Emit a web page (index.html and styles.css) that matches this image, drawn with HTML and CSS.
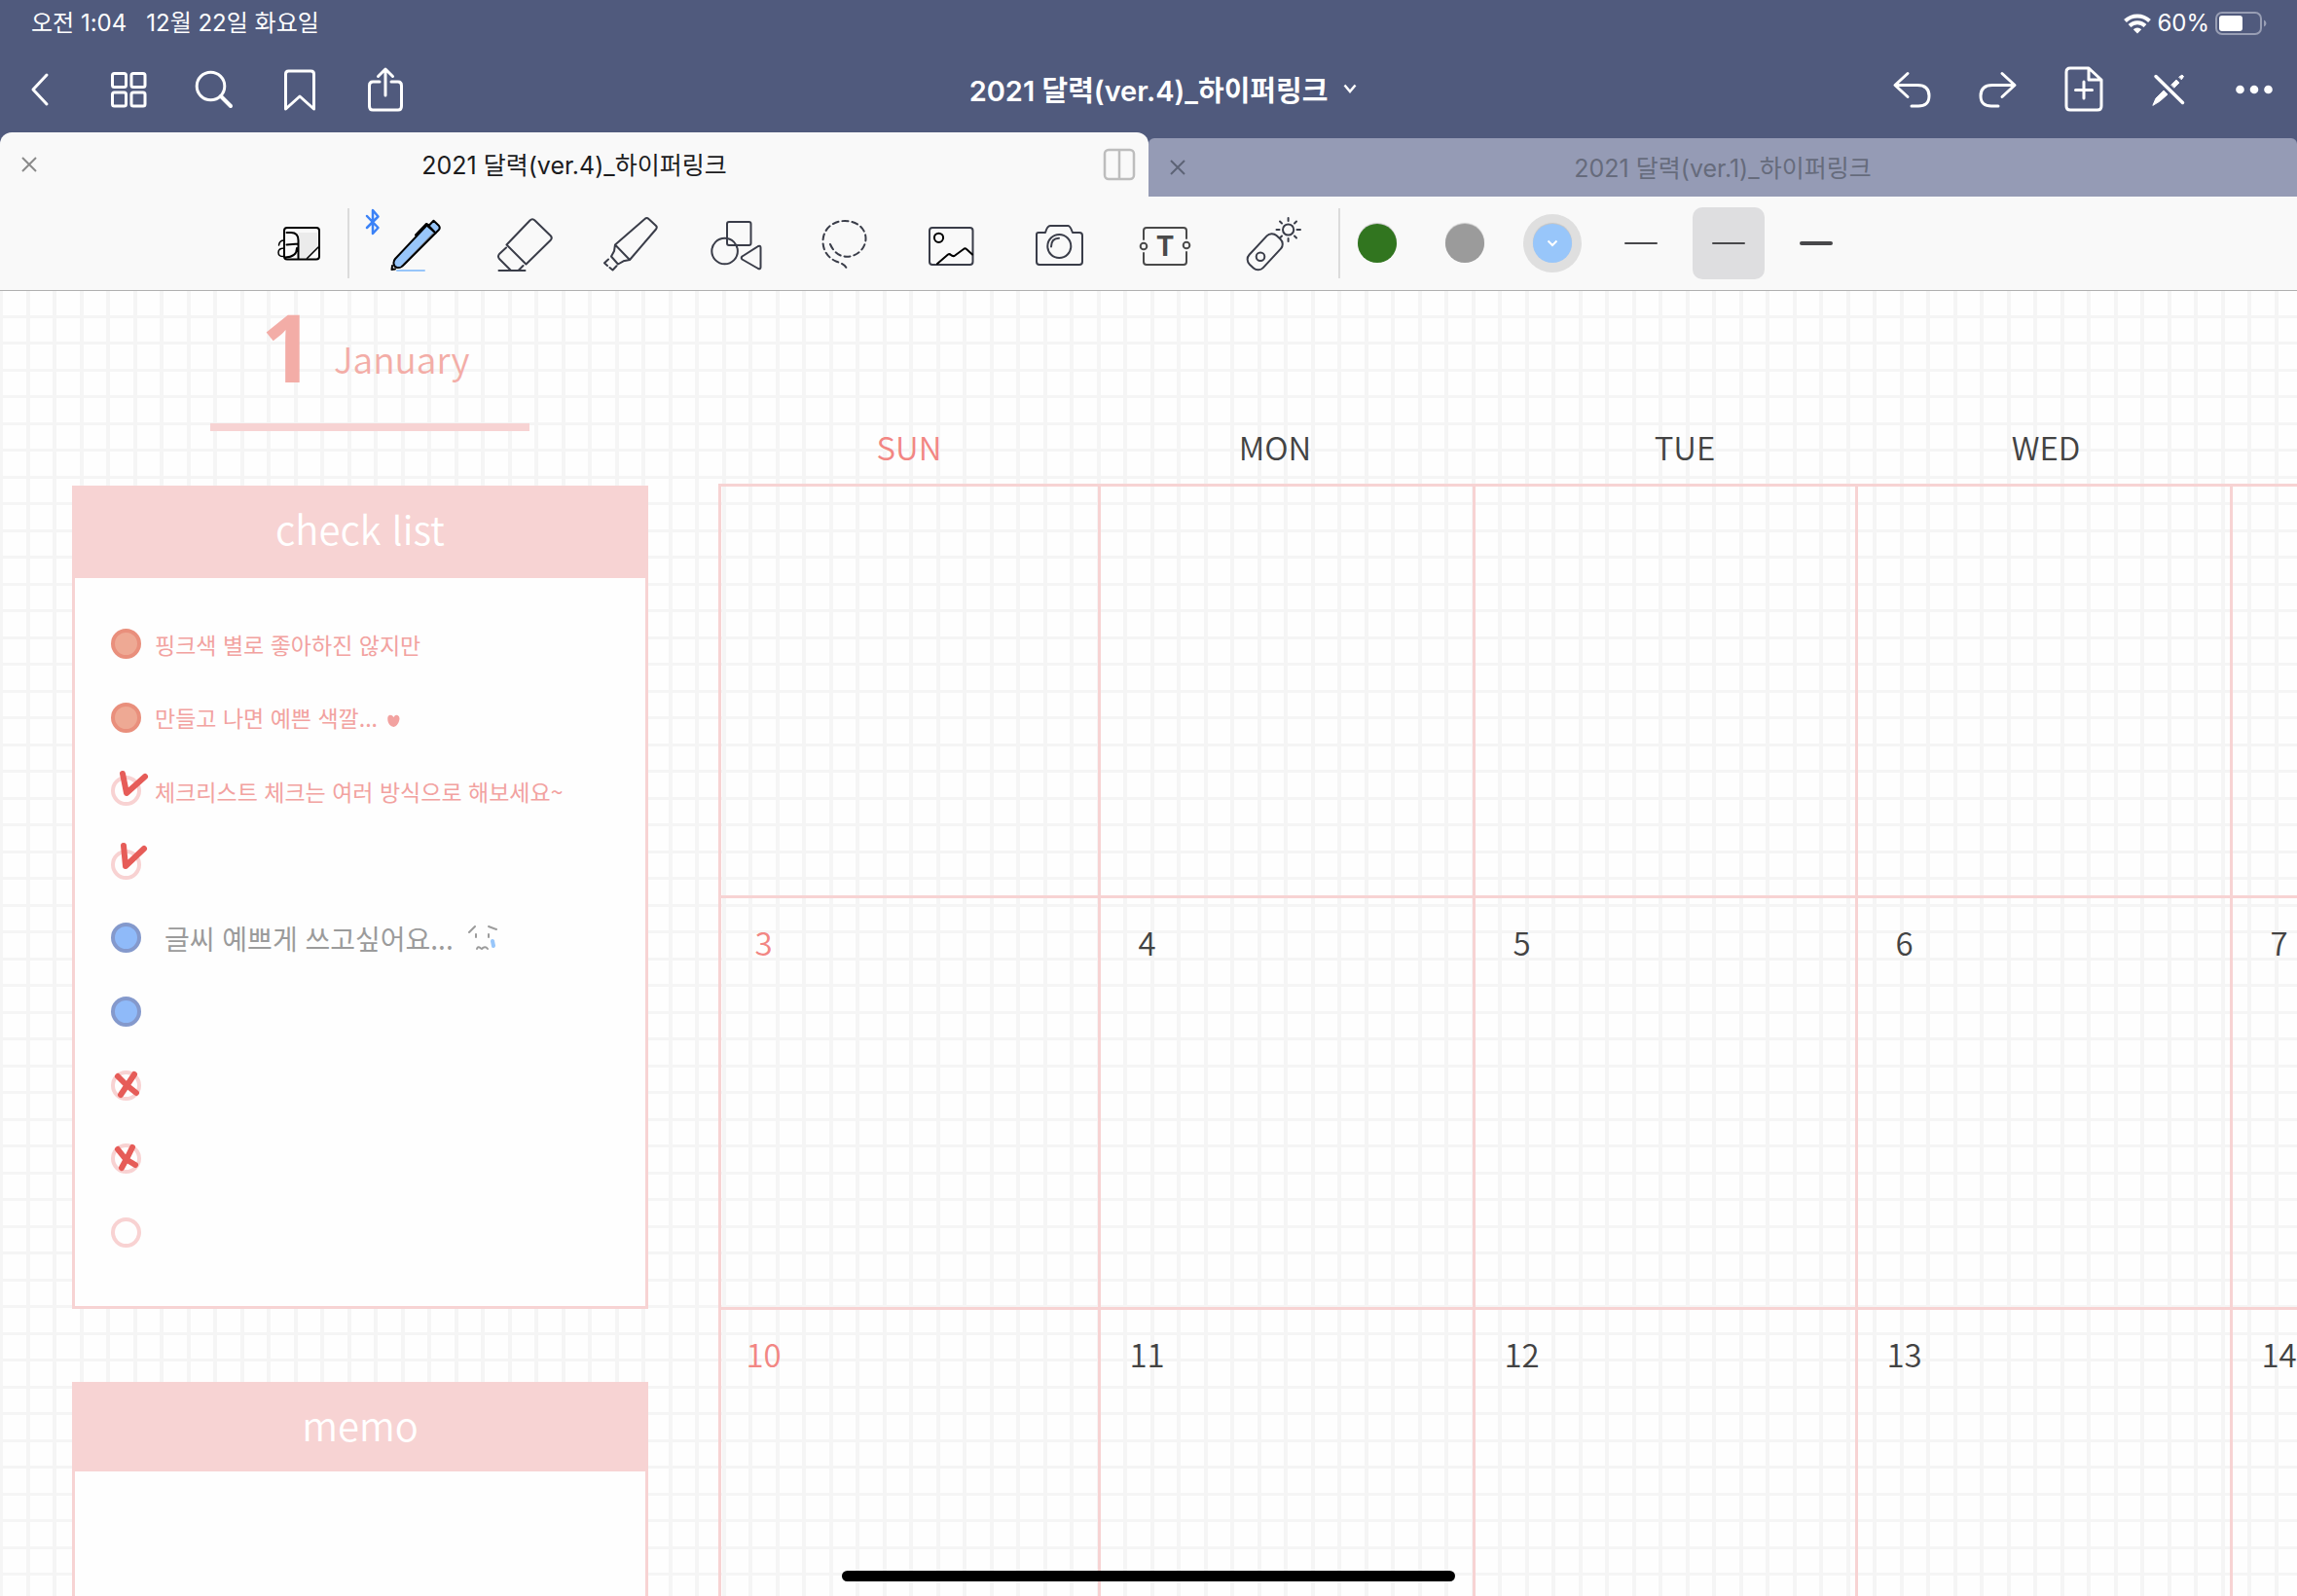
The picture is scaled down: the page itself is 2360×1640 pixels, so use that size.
FILE: index.html
```html
<!DOCTYPE html>
<html lang="ko">
<head>
<meta charset="utf-8">
<meta name="viewport" content="width=device-width, initial-scale=1">
<title>2021 달력(ver.4)_하이퍼링크</title>
<link rel="stylesheet" href="styles.css">
</head>
<body>
<div class="app">
  <header class="top">
    <div class="status">
      <span>오전 1:04</span>
      <span>12월 22일 화요일</span>
      <span class="status-right">
        <svg class="wifi" width="28" height="22" viewBox="0 0 28 22" aria-label="Wi-Fi"><g fill="none" stroke="#fff" stroke-width="4"><path d="M1.500 8.500A18 18 0 0 1 26.500 8.500"/><path d="M6 13.500A11.500 11.500 0 0 1 22 13.500"/></g><path d="M14 21.500L9.800 17.200A6 6 0 0 1 18.200 17.200Z" fill="#fff"/></svg>
        <span>60%</span>
        <svg width="54" height="24" viewBox="0 0 54 24" aria-label="배터리"><rect x="1" y="1" width="46" height="22" rx="6" fill="none" stroke="#989eb4" stroke-width="2"/><rect x="4" y="4" width="24" height="16" rx="3" fill="#fff"/><path d="M50 8.500Q52.500 9.500 52.500 12T50 15.500Z" fill="#989eb4"/></svg>
      </span>
    </div>
    <nav class="nav">
      <div class="nav-group">
        <button class="nav-btn" aria-label="뒤로"><svg viewBox="0 0 48 48"><path d="M28 9L14 24L28 39"/></svg></button>
        <button class="nav-btn" aria-label="페이지 목록"><svg viewBox="0 0 48 48"><rect x="7.500" y="7.500" width="14" height="14" rx="2"/><rect x="27" y="7.500" width="14" height="14" rx="2"/><rect x="7.500" y="27" width="14" height="14" rx="2"/><rect x="27" y="27" width="14" height="14" rx="2"/></svg></button>
        <button class="nav-btn" aria-label="검색"><svg viewBox="0 0 48 48"><circle cx="20.500" cy="20.500" r="14.300"/><path d="M31 31L41 41" stroke-width="4"/></svg></button>
        <button class="nav-btn" aria-label="북마크"><svg viewBox="0 0 48 48"><path d="M9.500 44V8Q9.500 5 12.500 5H35.500Q38.500 5 38.500 8V44L24 31Z"/></svg></button>
        <button class="nav-btn" aria-label="공유"><svg viewBox="0 0 48 48"><path d="M18 16H11Q7.500 16 7.500 20V41Q7.500 45 11 45H37Q40.500 45 40.500 41V20Q40.500 16 37 16H30M24 30V3M16.500 10.500L24 3L31.500 10.500"/></svg></button>
      </div>
      <button class="doc-title">2021 달력(ver.4)_하이퍼링크
        <svg width="14" height="10" viewBox="0 0 14 10"><path d="M1.500 1.500L7 8L12.500 1.500" fill="none" stroke="#fff" stroke-width="2.500"/></svg>
      </button>
      <div class="nav-group nav-end">
        <button class="nav-btn" aria-label="실행 취소"><svg viewBox="0 0 48 48"><path d="M20 7.500L7 19.500L20 31.500M8 19.500H30Q42 19.500 42 30.500T30 41H24"/></svg></button>
        <button class="nav-btn" aria-label="다시 실행"><svg viewBox="0 0 48 48"><path d="M29 7.500L42 19.500L29 31.500M41 19.500H19Q7 19.500 7 30.500T19 41H25"/></svg></button>
        <button class="nav-btn" aria-label="페이지 추가"><svg viewBox="0 0 48 48"><path d="M11 2H30L43 14V41Q43 45 39 45H11Q7 45 7 41V6Q7 2 11 2ZM30 2V14H43M25 16V33M16.500 24.500H33.500"/></svg></button>
        <button class="nav-btn" aria-label="읽기 전용"><svg viewBox="0 0 48 48"><path d="M11 10.500L38.500 37.500" stroke-width="3.500"/><path d="M8 40L11 33L19 25L23 29L15 36Z M27 19L32 14L35 17L30 22Z M35 11L38 9L39.500 10.500L37.500 13.500Z" fill="#fff" stroke-width="1"/></svg></button>
        <button class="nav-btn" aria-label="더 보기"><svg viewBox="0 0 48 48"><g fill="#fff" stroke="none"><circle cx="9.500" cy="24" r="4.300"/><circle cx="24" cy="24" r="4.300"/><circle cx="38.500" cy="24" r="4.300"/></g></svg></button>
      </div>
    </nav>
    <div class="tabs">
      <div class="tab tab-active">
        <button class="tab-close" aria-label="탭 닫기"><svg viewBox="0 0 16 16"><path d="M1 1L15 15M15 1L1 15"/></svg></button>
        <a class="tab-name" href="#ver4">2021 달력(ver.4)_하이퍼링크</a>
        <button class="tab-split" aria-label="화면 분할"><svg width="34" height="34" viewBox="0 0 34 34" fill="none" stroke="#bdbdbd" stroke-width="2.500"><rect x="2" y="2" width="30" height="30" rx="4"/><path d="M17 2V32"/></svg></button>
      </div>
      <div class="tab">
        <button class="tab-close" aria-label="탭 닫기"><svg viewBox="0 0 16 16"><path d="M1 1L15 15M15 1L1 15"/></svg></button>
        <a class="tab-name" href="#ver1">2021 달력(ver.1)_하이퍼링크</a>
      </div>
    </div>
  </header>

  <div class="toolbar" role="toolbar">
    <button class="tool tool-zoom" aria-label="확대 창"><svg viewBox="0 0 60 60"><path d="M29.500 19H49V34L38.500 45H29.500Z" fill="#ebebeb" stroke="none"/><g stroke="#000"><rect x="15" y="14" width="36" height="32.500" rx="3"/><path d="M17.500 19H22Q29.500 19 29.500 27V45.500M17.500 31.500L29.500 30.500M28 35Q28 44 16 44.500"/><path d="M9.500 32Q10 27 15 27M15 35Q9 35 9 39.500T15 43.500" stroke-width="1.500"/><path d="M38.500 45.500L50 34" stroke-width="1.500"/></g></svg></button>
    <span class="divider"></span>
    <div class="tools">
      <button class="tool" aria-label="펜"><svg viewBox="0 0 60 60"><path d="M-21 2L-9.500 14L-15 20V-4L-9.500 2.500L-21 14" stroke="#3b82f7" stroke-width="2.500"/><path d="M40.500 11.500L8 46C5.500 49 6 54 10 55C13 55.500 15 54.500 17 52L49.500 19.500Z" fill="#98c6fa" stroke="none"/><path d="M46.500 19.500L22 45L13 54L17 52L49 20Z" fill="#7b8088" stroke="none"/><path d="M42.500 12L47.500 6.800L53 12Q54.500 14 53 16L49.500 19.500Z" fill="#98c6fa" stroke="#000"/><path d="M40.500 11.500L8 46C5.500 49 6 54 10 55C13 55.500 15 54.500 17 52L49.500 19.500ZM29 21.500L40 10L42 11" stroke="#000"/><path d="M5 53L4.500 57L8 56.500" stroke="#000"/><path d="M10 58H38" stroke="#98c6fa"/></svg></button>
      <button class="tool" aria-label="지우개"><svg viewBox="0 0 60 60"><path d="M12.500 31.500L36.500 6.500Q39 4 41.500 6.500L57.500 22Q60 24.500 57.500 27L32.500 51.500ZM12 34.500L5 41Q3 43.500 5 46L16.500 57.500M29.500 53L25 57.500M4.500 58H31.500"/></svg></button>
      <button class="tool" aria-label="형광펜"><svg viewBox="0 0 60 60"><path d="M14 31.500L44.500 5Q46.500 3 48.500 5L56 12Q57.500 13.500 56 15.500L29 47ZM14 31.500L13 38L10 43.500L17 51.500L22.500 48.300L29 47M7 46.500L3 50.300L6 53M8.500 55L11.500 57.500L15.500 53.300"/></svg></button>
      <button class="tool" aria-label="도형"><svg viewBox="0 0 60 60"><rect x="19" y="8" width="24.500" height="24" rx="2"/><circle cx="16.600" cy="38" r="13.300"/><path d="M34.500 43.500L51 33Q53.500 32 53.500 34.500V54.500Q53.500 57 51 56L34.500 46.500Q33 45 34.500 43.500Z"/></svg></button>
      <button class="tool" aria-label="올가미"><svg viewBox="0 0 60 60"><path stroke-dasharray="6 4" d="M15 31C19 40 25 43.700 32 43.700C43 43.700 51.500 35 51.500 25C51.500 14.500 42 7 30 7C17 7 7.500 16 7.500 28C7.500 38 13 45 21 48.500C28 51 32 53 32 58"/></svg></button>
      <button class="tool" aria-label="이미지"><svg viewBox="0 0 60 60"><rect x="7" y="14" width="44.500" height="38" rx="3"/><g stroke="#000"><circle cx="16.500" cy="24.300" r="4.600"/><path d="M15 51L26 41.500Q27.500 40.500 29 42T32.500 43L42 36Q43.500 34.500 45 36L51 41.500"/></g></svg></button>
      <button class="tool" aria-label="카메라"><svg viewBox="0 0 60 60"><path d="M9 19H16Q18 12 21 12H39.500Q41.500 12 44 19H51Q54 19 54 22V49Q54 52 51 52H10Q7 52 7 49V21Q7 19 9 19Z"/><circle cx="30.300" cy="33" r="12"/><path d="M22 33.500Q22 25 30 24.700"/></svg></button>
      <button class="tool" aria-label="텍스트"><svg viewBox="0 0 60 60"><g stroke="#4a4a4a"><path d="M7 26V17Q7 14 10 14H48Q51 14 51 17V25M7 40V49Q7 52 10 52H48Q51 52 51 49V39"/><circle cx="7" cy="33" r="3.300"/><circle cx="51" cy="32" r="3.300"/></g><text x="29" y="43" class="tool-letter">T</text></svg></button>
      <button class="tool" aria-label="레이저 포인터"><svg viewBox="0 0 60 60"><rect x="1.500" y="29" width="40.500" height="19.500" rx="7" transform="rotate(-47 21.700 38.800)"/><circle cx="17" cy="43.700" r="4.300"/><circle cx="45.600" cy="16" r="5.600"/><path d="M45.600 4V7M45.600 25V28M33.500 16H36.500M54.500 16H58M37 7.500L39 9.500M54 7.500L52 9.500M54 24.500L52 22.500M37 24.500L39 22.500"/></svg></button>
    </div>
    <span class="divider divider-end"></span>
    <div class="colors">
      <button class="color" aria-label="초록"><span class="swatch swatch-green"></span></button>
      <button class="color" aria-label="회색"><span class="swatch swatch-gray"></span></button>
      <button class="color color-on" aria-label="파랑" aria-pressed="true"><span class="swatch swatch-blue"><svg width="12" height="8" viewBox="0 0 12 8"><path d="M1.500 1.500L6 6L10.500 1.500" fill="none" stroke="#fff" stroke-width="2"/></svg></span></button>
    </div>
    <div class="strokes">
      <button class="stroke" aria-label="가는 선"><span class="line"></span></button>
      <button class="stroke stroke-on" aria-label="보통 선" aria-pressed="true"><span class="line"></span></button>
      <button class="stroke" aria-label="굵은 선"><span class="line line-thick"></span></button>
    </div>
  </div>

  <main class="page">
    <aside class="side">
      <h1 class="month"><span class="month-num">1</span><span class="month-name">January</span></h1>
      <section class="panel checklist">
        <h2 class="panel-title">check list</h2>
        <ul class="checks">
          <li><label class="check"><span class="mark"><input type="checkbox" class="dot dot-coral" checked></span><span>핑크색 별로 좋아하진 않지만</span></label></li>
          <li><label class="check"><span class="mark"><input type="checkbox" class="dot dot-coral" checked></span><span>만들고 나면 예쁜 색깔...<svg class="heart" width="13" height="13" viewBox="0 0 13 13"><path d="M6.500 3Q8 0 10.500 1Q13.500 2.500 12 7Q10.500 12 6.500 13Q1.500 12 .5 7Q-.5 1.500 2.500 .8Q5 .5 6.500 3Z" fill="#f2a2a0"/></svg></span></label></li>
          <li><label class="check"><span class="mark"><input type="checkbox" class="dot" checked><svg class="ink" viewBox="0 0 48 48"><path d="M20 6L24 26L43 9"/></svg></span><span>체크리스트 체크는 여러 방식으로 해보세요~</span></label></li>
          <li><label class="check"><span class="mark"><input type="checkbox" class="dot" checked aria-label="항목 4"><svg class="ink" viewBox="0 0 48 48"><path d="M21 4L23 25L42 7"/></svg></span></label></li>
          <li><label class="check check-gray"><span class="mark"><input type="checkbox" class="dot dot-blue" checked></span><span>글씨 예쁘게 쓰고싶어요...</span><svg class="face" width="32" height="28" viewBox="0 0 32 28"><path d="M2 8L8 2M22 2L30 5M9 10V13M22 10V13M10 25Q11 22 13.500 24Q15 26 16 24Q19 22 21 25" fill="none" stroke="#9b9b9b" stroke-width="2" stroke-linecap="round"/><path d="M26 17L27 22" stroke="#98c6fa" stroke-width="4" stroke-linecap="round"/></svg></label></li>
          <li><label class="check"><span class="mark"><input type="checkbox" class="dot dot-blue" checked aria-label="항목 6"></span></label></li>
          <li><label class="check"><span class="mark"><input type="checkbox" class="dot" checked aria-label="항목 7"><svg class="ink" viewBox="0 0 48 48"><path d="M15 14L24 23L34 31M32 12L24 24L18 33"/></svg></span></label></li>
          <li><label class="check"><span class="mark"><input type="checkbox" class="dot" checked aria-label="항목 8"><svg class="ink" viewBox="0 0 48 48"><path d="M15 14L23 24L33 30M30 12L25 22L19 33"/></svg></span></label></li>
          <li><label class="check"><span class="mark"><input type="checkbox" class="dot" aria-label="항목 9"></span></label></li>
        </ul>
      </section>
      <section class="panel memo">
        <h2 class="panel-title">memo</h2>
      </section>
    </aside>

    <table class="calendar">
      <thead><tr><th class="sunday">SUN</th><th>MON</th><th>TUE</th><th>WED</th></tr></thead>
      <tbody>
        <tr><td></td><td></td><td></td><td></td><td></td></tr>
        <tr><td class="sunday"><span>3</span></td><td><span>4</span></td><td><span>5</span></td><td><span>6</span></td><td><span>7</span></td></tr>
        <tr><td class="sunday"><span>10</span></td><td><span>11</span></td><td><span>12</span></td><td><span>13</span></td><td><span>14</span></td></tr>
      </tbody>
    </table>
  </main>
  <div class="home-bar"></div>
</div>
</body>
</html>
```

FILE: styles.css
```css
* { box-sizing: border-box; }

body {
  margin: 0;
  font-family: Inter, "Noto Sans CJK KR", sans-serif;
  color: #1c1c1e;
}

button {
  margin: 0;
  padding: 0;
  border: 0;
  background: none;
  color: inherit;
  font: inherit;
  display: flex;
  align-items: center;
  justify-content: center;
}

a { color: inherit; text-decoration: none; }
svg { display: block; }

.app {
  position: relative;
  height: 100vh;
  display: flex;
  flex-direction: column;
  overflow: hidden;
  background: #fefefe;
}

/* status bar and navigation */
.top { background: #505a7d; color: #fff; }

.status {
  display: flex;
  align-items: center;
  gap: 20px;
  height: 48px;
  padding: 0 30px 0 32px;
  font-size: 24px;
  line-height: 32px;
}
.status-right {
  display: flex;
  align-items: center;
  gap: 6px;
  margin-left: auto;
}

.nav {
  display: grid;
  grid-template-columns: 1fr auto 1fr;
  align-items: center;
  height: 88px;
}
.nav-group { display: flex; }
.nav-end { justify-content: flex-end; }
.nav-btn { width: 88px; height: 88px; }
.nav-btn svg {
  width: 48px;
  height: 48px;
  fill: none;
  stroke: #fff;
  stroke-width: 3;
  stroke-linecap: round;
  stroke-linejoin: round;
}
.doc-title {
  gap: 16px;
  padding: 0 0 2px 30px;
  font-size: 29px;
  font-weight: 600;
}

/* document tabs */
.tabs {
  display: grid;
  grid-template-columns: 1fr 1fr;
  align-items: end;
}
.tab {
  display: grid;
  grid-template-columns: 60px 1fr 60px;
  align-items: center;
  height: 60px;
  border-radius: 6px 6px 0 0;
  background: #959bb5;
  color: #666b7c;
}
.tab-active {
  height: 66px;
  border-radius: 12px 12px 0 0;
  background: #f9f9f9;
  color: #1c1c1e;
}
.tab-close { height: 60px; }
.tab-close svg {
  width: 16px;
  height: 16px;
  fill: none;
  stroke: #5d6376;
  stroke-width: 2;
}
.tab-active .tab-close svg { stroke: #8a8a8a; }
.tab-split { height: 60px; }
.tab-name { padding-bottom: 3px; text-align: center; font-size: 25px; }

/* tools */
.toolbar {
  display: flex;
  align-items: center;
  height: 97px;
  padding-left: 257px;
  border-bottom: 1px solid #b0b0b0;
  background: #f9f9f9;
}
.tools, .colors, .strokes { display: flex; align-items: center; }
.tool { width: 110px; height: 96px; }
.tool-zoom { width: 100px; }
.tool svg {
  width: 60px;
  height: 60px;
  overflow: visible;
  fill: none;
  stroke: #3a3d49;
  stroke-width: 2;
  stroke-linecap: round;
  stroke-linejoin: round;
}
.tool-letter {
  fill: #4a4a4a;
  stroke: none;
  font-size: 28px;
  font-weight: 700;
  text-anchor: middle;
}
.divider { width: 2px; height: 72px; margin-right: 14px; background: #dcdcdc; }
.divider-end { margin: 0 8px 0 12px; }

.colors { gap: 30px; }
.color { width: 60px; height: 60px; border-radius: 50%; }
.color-on { background: #dfdfdf; }
.swatch {
  display: flex;
  align-items: center;
  justify-content: center;
  width: 40px;
  height: 40px;
  border-radius: 50%;
  box-shadow: 0 -1px 1px #c4c4c4;
}
.swatch-green { background: #31751f; }
.swatch-gray { background: #9b9b9b; }
.swatch-blue { background: #98c6fa; }

.strokes { gap: 16px; margin-left: 24px; }
.stroke { width: 74px; height: 74px; border-radius: 10px; }
.stroke-on { background: #dedee0; }
.line { width: 34px; height: 2px; border-radius: 2px; background: #48484b; }
.line-thick { height: 4px; }

/* planner page on squared paper */
.page {
  flex: 1;
  min-height: 0;
  display: grid;
  grid-template-columns: 592fr 1622fr;
  gap: 72px;
  align-items: start;
  padding-left: 74px;
  font-family: "Noto Sans CJK KR", sans-serif;
  font-weight: 350;
  background-image:
    linear-gradient(to bottom, transparent 25px, #f5f5f5 25px, #f5f5f5 28px, transparent 28px, transparent 52px, #f5f5f5 52px, #f5f5f5 55px),
    linear-gradient(to right, #f5f5f5 3px, transparent 3px, transparent 27px, #f5f5f5 27px, #f5f5f5 31px, transparent 31px, transparent 54px, #f5f5f5 54px);
  background-size: 55px 55px;
}

.side { display: flex; flex-direction: column; }

.month {
  display: flex;
  align-items: flex-start;
  gap: 20px;
  width: 328px;
  height: 144px;
  margin: 0 0 56px 142px;
  padding-left: 52px;
  border-bottom: 8px solid #f7d3d3;
  color: #f3ada7;
  font-weight: 350;
}
.month-num {
  font-family: "Open Sans", sans-serif;
  font-size: 96px;
  font-weight: 700;
  line-height: 114px;
}
.month-name { font-size: 37px; line-height: 138px; }

.panel { border: 3px solid #f7d3d3; background: #fefefe; }
.checklist {
  display: flex;
  flex-direction: column;
  min-height: 846px;
  margin-bottom: 75px;
}
.memo { min-height: 400px; }
.panel-title {
  margin: 0;
  height: 92px;
  background: #f7d3d3;
  color: #fff;
  font-size: 40px;
  font-weight: 350;
  line-height: 82px;
  text-align: center;
}
.memo .panel-title { height: 89px; }

.checks {
  flex: 1;
  display: grid;
  grid-auto-rows: 1fr;
  margin: 0;
  padding: 30px 0 38px 37px;
  list-style: none;
  color: #f2a2a0;
  font-size: 23px;
  font-weight: 400;
  line-height: 32px;
}
.checks li { display: flex; }
.check { display: flex; align-items: center; gap: 14px; }
.check-gray { color: #9b9b9b; font-size: 28px; }
.check-gray .mark { margin-right: 10px; }
.mark { position: relative; width: 31px; height: 31px; }
.dot {
  appearance: none;
  display: block;
  width: 31px;
  height: 31px;
  margin: 0;
  border: 4px solid #f8d2d2;
  border-radius: 50%;
}
.dot-coral { border-color: #e98f7c; background: #eea994; }
.dot-blue { border-color: #8499cc; background: #8fbaf9; }
.ink {
  position: absolute;
  left: -8px;
  top: -8px;
  width: 48px;
  height: 48px;
  fill: none;
  stroke: #e65c58;
  stroke-width: 6;
  stroke-linecap: round;
  stroke-linejoin: round;
}
.heart { display: inline-block; margin-left: 10px; }

/* calendar */
.calendar { display: block; color: #434343; font-size: 33px; line-height: 40px; }
.calendar thead, .calendar tbody { display: block; }
.calendar tr { display: grid; }
.calendar thead tr {
  grid-template-columns: 392fr 360fr 482fr 260fr 128fr;
  height: 198px;
  align-items: end;
  padding-bottom: 18px;
}
.calendar tbody tr {
  grid-template-columns: minmax(0, 390fr) minmax(0, 385fr) minmax(0, 393fr) minmax(0, 385fr) minmax(0, 69fr);
  height: 423px;
}
.calendar th { padding: 0; font-weight: 350; }
.calendar td {
  padding: 25px 0 0;
  border: solid #f7d3d3;
  border-width: 3px 0 0 3px;
}
.calendar td span { display: block; width: 95px; text-align: center; }
.calendar .sunday { color: #f28683; }
.calendar td.sunday span { width: 87px; }

.home-bar {
  position: absolute;
  left: 50%;
  bottom: 15px;
  width: 630px;
  height: 11px;
  margin-left: -315px;
  border-radius: 6px;
  background: #000;
}
```
